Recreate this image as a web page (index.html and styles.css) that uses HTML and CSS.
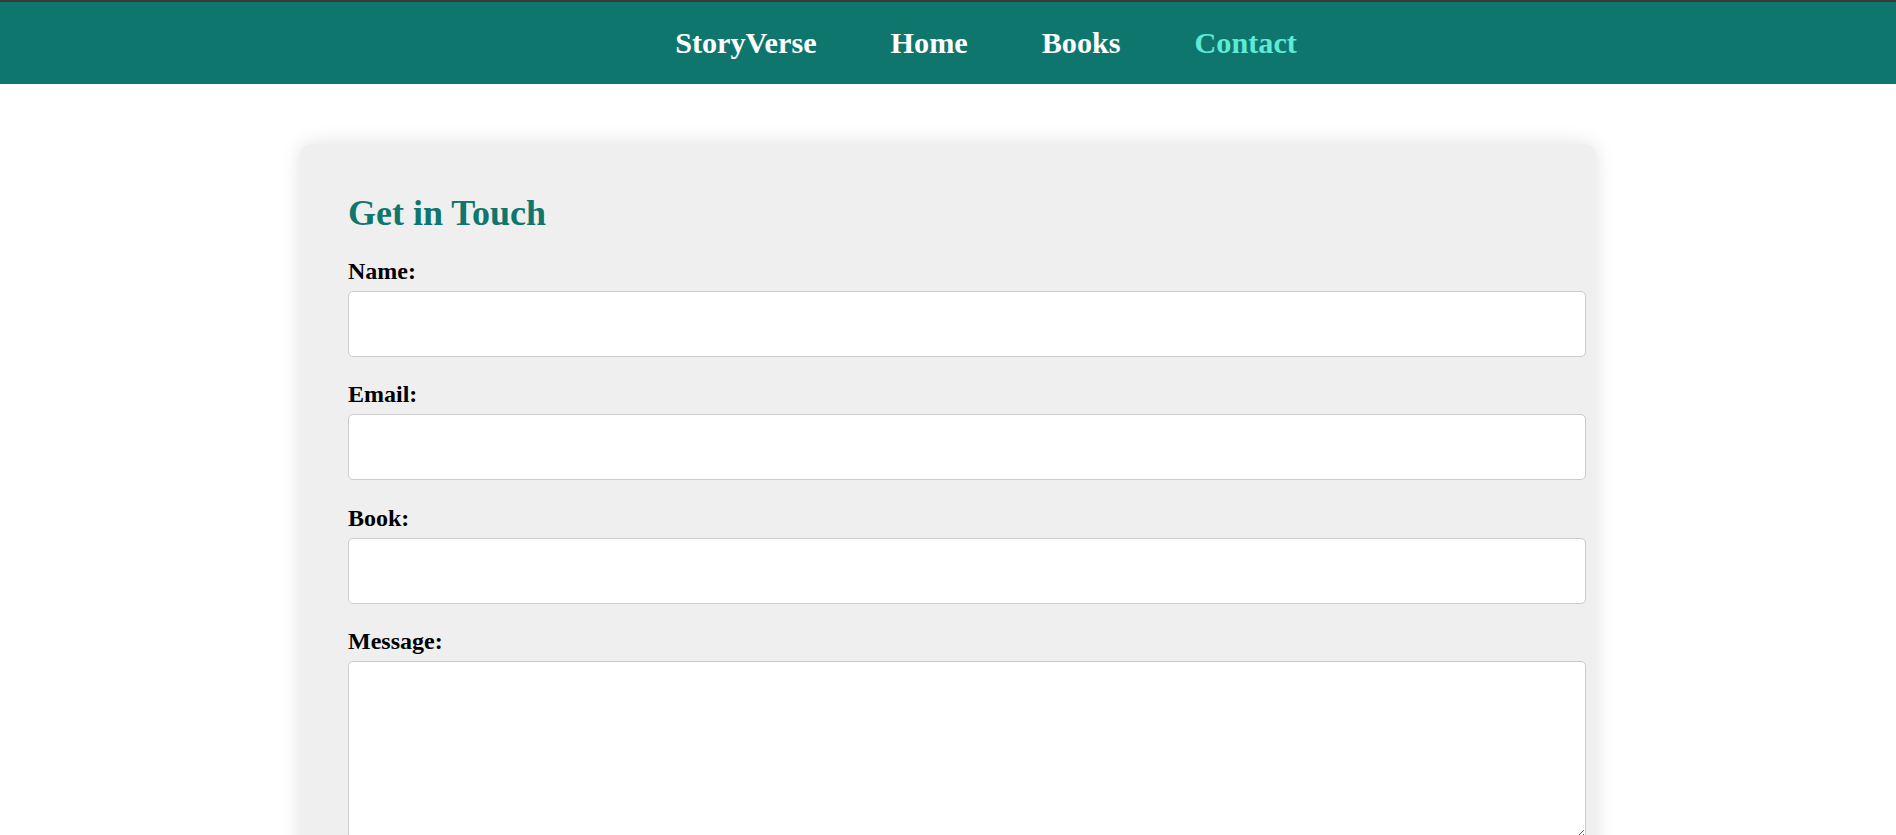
FILE: index.html
```html
<!DOCTYPE html>
<html lang="en">
<head>
<meta charset="utf-8">
<title>StoryVerse - Contact</title>
<link rel="stylesheet" href="styles.css">
</head>
<body>
<header class="site-header">
  <nav class="nav">
    <a class="nav-link brand" href="#">StoryVerse</a>
    <a class="nav-link" href="#">Home</a>
    <a class="nav-link" href="#">Books</a>
    <a class="nav-link active" href="#">Contact</a>
  </nav>
</header>
<main class="main">
  <section class="card">
    <h2 class="card-title">Get in Touch</h2>
    <form class="form">
      <div class="field">
        <label class="label" for="name">Name:</label>
        <input class="input" id="name" type="text">
      </div>
      <div class="field">
        <label class="label" for="email">Email:</label>
        <input class="input" id="email" type="email">
      </div>
      <div class="field">
        <label class="label" for="book">Book:</label>
        <input class="input" id="book" type="text">
      </div>
      <div class="field">
        <label class="label" for="message">Message:</label>
        <textarea class="input textarea" id="message"></textarea>
      </div>
    </form>
  </section>
</main>
</body>
</html>
```
FILE: styles.css
```css
html, body {
  margin: 0;
  padding: 0;
}
body {
  font-family: "Liberation Serif", "Times New Roman", serif;
  background: #ffffff;
  color: #000;
}
.site-header {
  background: #0f766e;
  border-top: 2px solid #3a3a3a;
  height: 82px;
  display: flex;
  align-items: center;
  justify-content: center;
}
.nav {
  display: flex;
  gap: 74px;
  padding-left: 76px;
  align-items: center;
}
.nav-link {
  color: #ffffff;
  text-decoration: none;
  font-weight: bold;
  font-size: 30.2px;
}
.nav-link.active {
  color: #5eead4;
}
.main {
  padding-top: 60px;
  display: flex;
  justify-content: center;
}
.card {
  width: 1200px;
  padding: 48px;
  background: #efefef;
  border-radius: 12px;
  box-shadow: 0 0 20px rgba(0, 0, 0, 0.12);
}
.card-title {
  margin: 0 0 24px;
  color: #0f766e;
  font-size: 36px;
  font-weight: bold;
}
.field {
  margin-bottom: 24.3px;
}
.label {
  display: block;
  font-weight: bold;
  font-size: 24px;
  margin-bottom: 6px;
}
.input {
  display: block;
  width: 100%;
  height: 28px;
  padding: 18px;
  border: 1px solid #cccccc;
  border-radius: 5px;
  background: #ffffff;
  font-family: inherit;
  font-size: 16px;
  margin: 0;
}
.textarea {
  height: 140px;
  resize: both;
}
```
